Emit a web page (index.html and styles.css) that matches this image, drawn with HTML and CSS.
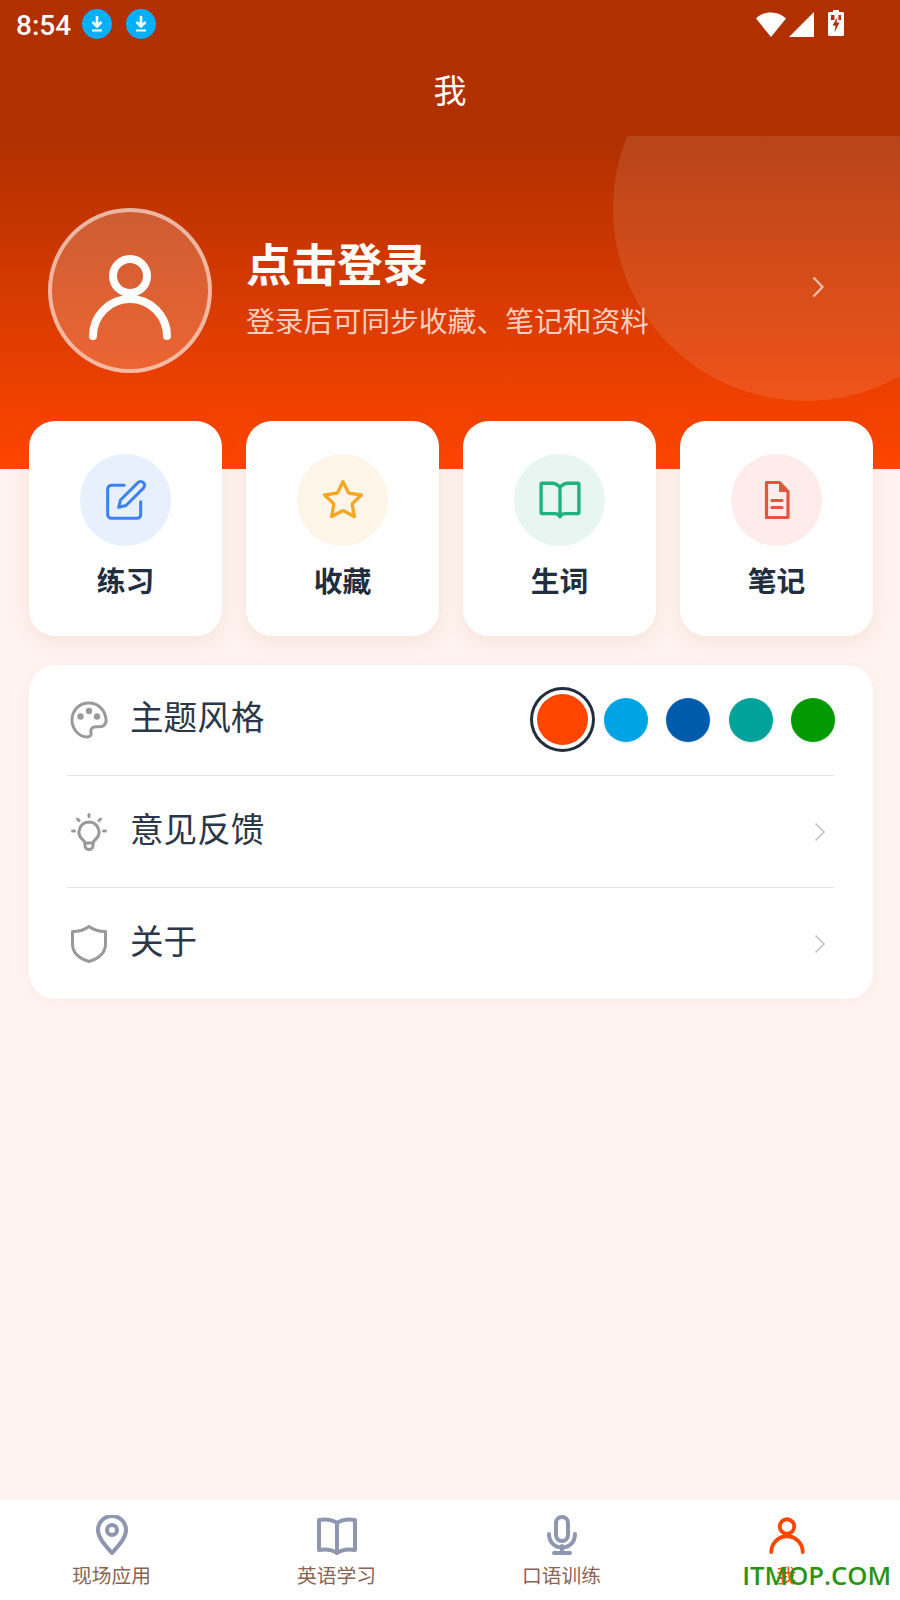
FILE: index.html
```html
<!DOCTYPE html>
<html lang="zh-CN">
<head>
<meta charset="utf-8">
<title>我</title>
<link rel="stylesheet" href="styles.css">
</head>
<body>
<div class="app">
  <header class="topbar">
    <div class="status">
      <span class="time">8:54</span>
      <svg class="dl" viewBox="0 0 30 30"><circle cx="15" cy="15" r="15" fill="#00b0ff"/><path d="M15 7v10M10.500 13l4.500 4.500 4.500-4.500" fill="none" stroke="#fff" stroke-width="2.600"/><path d="M10 21.500h10" stroke="#fff" stroke-width="2"/></svg>
      <svg class="dl dl-second" viewBox="0 0 30 30"><circle cx="15" cy="15" r="15" fill="#00b0ff"/><path d="M15 7v10M10.500 13l4.500 4.500 4.500-4.500" fill="none" stroke="#fff" stroke-width="2.600"/><path d="M10 21.500h10" stroke="#fff" stroke-width="2"/></svg>
      <span class="status-gap"></span>
      <svg class="wifi" viewBox="0 0 30 25"><path d="M0 6.500C4 2.500 9 .5 15 .5s11 2 15 6L15 25z" fill="#fff"/></svg>
      <svg class="signal" viewBox="0 0 25 25"><path d="M25 0v25H0z" fill="#fff"/></svg>
      <svg class="battery" viewBox="0 0 16 26"><path d="M5 0h6v2h3.500A1.500 1.500 0 0 1 16 3.500v21a1.500 1.500 0 0 1-1.500 1.500h-13A1.500 1.500 0 0 1 0 24.500v-21A1.500 1.500 0 0 1 1.500 2H5z" fill="#fff"/><path d="M3 5h3.500v5H3zM10.500 5H13v5h-2.500z" fill="#b03000"/><path d="M9.500 7 4.500 15.500h3l-1 7 5-10h-3z" fill="#b03000"/></svg>
    </div>
    <h1 class="page-title">我</h1>
  </header>

  <section class="hero">
    <div class="hero-disc"></div>
    <div class="avatar">
      <svg class="avatar-icon" viewBox="0 0 84 90"><circle cx="42" cy="23" r="17" fill="none" stroke="#fff" stroke-width="8"/><path d="M5 83A37 37 0 0 1 79 83" fill="none" stroke="#fff" stroke-width="8" stroke-linecap="round"/></svg>
    </div>
    <div class="hero-text">
      <div class="hero-name">点击登录</div>
      <div class="hero-sub">登录后可同步收藏、笔记和资料</div>
    </div>
    <svg class="hero-chev" viewBox="0 0 12 22"><path d="M1.500 1.500 10.500 11l-9 9.500" fill="none" stroke="currentColor" stroke-width="2.200"/></svg>
  </section>

  <section class="cards">
    <div class="card">
      <div class="card-icon tint-blue">
        <svg class="icon-44" viewBox="0 0 24 24" fill="none" stroke="#3b82f6" stroke-width="1.650" stroke-linecap="round" stroke-linejoin="round"><path d="M11 4H4a2 2 0 0 0-2 2v14a2 2 0 0 0 2 2h14a2 2 0 0 0 2-2v-7"/><path d="M18.500 2.500a2.121 2.121 0 0 1 3 3L12 15l-4 1 1-4z"/></svg>
      </div>
      <div class="card-label">练习</div>
    </div>
    <div class="card">
      <div class="card-icon tint-amber">
        <svg class="icon-44" viewBox="0 0 24 24" fill="none" stroke="#f5a623" stroke-width="1.800" stroke-linecap="round" stroke-linejoin="round"><path d="m12 2 3.090 6.260L22 9.270l-5 4.870 1.180 6.880L12 17.770l-6.180 3.250L7 14.140 2 9.270l6.910-1.010z"/></svg>
      </div>
      <div class="card-label">收藏</div>
    </div>
    <div class="card">
      <div class="card-icon tint-green">
        <svg class="icon-42" viewBox="0 0 40 40" fill="none" stroke="#1fb27f" stroke-width="3.200" stroke-linejoin="round"><path d="M20 8C18 5.500 15.500 4 12.500 4H3a1 1 0 0 0-1 1v27a1 1 0 0 0 1 1h12c2.500 0 4 1 5 3 1-2 2.500-3 5-3h12a1 1 0 0 0 1-1V5a1 1 0 0 0-1-1h-9.500C24.500 4 22 5.500 20 8zM20 8v28"/></svg>
      </div>
      <div class="card-label">生词</div>
    </div>
    <div class="card">
      <div class="card-icon tint-red">
        <svg class="icon-46" viewBox="0 0 46 46"><path d="M12.500 5.500h13l8.500 9v26H12.500z" fill="none" stroke="#e8533f" stroke-width="3.200" stroke-linejoin="round"/><path d="M25 5l9.500 10H25z" fill="#e8533f"/><path d="M18 23.500h10M18 30.500h10" stroke="#e8533f" stroke-width="3.200" stroke-linecap="round"/></svg>
      </div>
      <div class="card-label">笔记</div>
    </div>
  </section>

  <section class="list">
    <div class="row row-line">
      <svg class="row-icon" viewBox="0 0 38 38" fill="none" stroke="#999" stroke-width="3" stroke-linejoin="round"><path d="M19 2C9 2 2 9.500 2 19c0 9 7 17 15 17 3.500 0 4.500-2 4-4.500-.6-2.500.5-5 3-5.500 3-.5 6.500.5 9-1 2.500-1.500 3.500-4 3-7C35 9 28 2 19 2z"/><circle cx="10.500" cy="15.500" r="3.200" fill="#999" stroke="none"/><circle cx="19" cy="10" r="3.200" fill="#999" stroke="none"/><circle cx="27" cy="15.500" r="3.200" fill="#999" stroke="none"/></svg>
      <span class="row-text">主题风格</span>
      <div class="swatches">
        <span class="swatch swatch-on c1"></span>
        <span class="swatch c2"></span>
        <span class="swatch c3"></span>
        <span class="swatch c4"></span>
        <span class="swatch c5"></span>
      </div>
    </div>
    <div class="row row-line">
      <svg class="row-icon" viewBox="0 0 38 38" fill="none" stroke="#999" stroke-width="3" stroke-linecap="round"><path d="M19 9a10 10 0 0 0-6.500 17.500c1.500 1.300 2.500 2 2.500 3.500h8c0-1.500 1-2.200 2.500-3.500A10 10 0 0 0 19 9z"/><path d="M15 30v2.500a4 4 0 0 0 8 0V30"/><path d="M19 1.500v2M7.500 6 9 7.500M30.500 6 29 7.500M2.500 18h2M33.500 18h2"/></svg>
      <span class="row-text">意见反馈</span>
      <svg class="chev" viewBox="0 0 12 20"><path d="M1.500 1.500 10 10l-8.500 8.500" fill="none" stroke="currentColor" stroke-width="2"/></svg>
    </div>
    <div class="row">
      <svg class="row-icon" viewBox="0 0 38 38" fill="none" stroke="#999" stroke-width="3" stroke-linejoin="round"><path d="M19 1.500C14.500 5 8 6.500 2.500 6.500V19c0 8.500 7 14.500 16.500 17.500C28.500 33.500 35.500 27.500 35.500 19V6.500C30 6.500 23.500 5 19 1.500z"/></svg>
      <span class="row-text">关于</span>
      <svg class="chev" viewBox="0 0 12 20"><path d="M1.500 1.500 10 10l-8.500 8.500" fill="none" stroke="currentColor" stroke-width="2"/></svg>
    </div>
  </section>

  <div class="spacer"></div>

  <nav class="tabs">
    <div class="tab">
      <svg class="tab-icon" viewBox="0 0 40 40" fill="none" stroke="#8e96b0" stroke-width="4" stroke-linejoin="round"><path d="M20 38C13 30 6 23 6 15a14 14 0 0 1 28 0c0 8-7 15-14 23z"/><circle cx="20" cy="15" r="5"/></svg>
      <span class="tab-label">现场应用</span>
    </div>
    <div class="tab">
      <svg class="tab-icon" viewBox="0 0 40 40" fill="none" stroke="#8e96b0" stroke-width="4" stroke-linejoin="round"><path d="M20 8C15 4.500 8 4 2 5v30c6-1 13-.5 18 3 5-3.500 12-4 18-3V5c-6-1-13-.5-18 3zM20 8v30"/></svg>
      <span class="tab-label">英语学习</span>
    </div>
    <div class="tab">
      <svg class="tab-icon" viewBox="0 0 40 40" fill="none" stroke="#8e96b0" stroke-width="4" stroke-linecap="round"><rect x="14" y="2" width="12" height="24" rx="6"/><path d="M7 19c0 18 26 18 26 0"/><path d="M20 31v6"/><path d="M12 38h16"/></svg>
      <span class="tab-label">口语训练</span>
    </div>
    <div class="tab tab-on">
      <svg class="tab-icon" viewBox="-2 -4 88 94"><circle cx="42" cy="23" r="17" fill="none" stroke="#ff4500" stroke-width="9"/><path d="M5 83A37 37 0 0 1 79 83" fill="none" stroke="#ff4500" stroke-width="9" stroke-linecap="round"/></svg>
      <span class="tab-label">我</span>
    </div>
  </nav>
  <div class="watermark">ITMOP.COM</div>
</div>
</body>
</html>
```

FILE: styles.css
```css
* { box-sizing: border-box; }
html, body { margin: 0; padding: 0; }
body { font-family: "Noto Sans CJK SC", "Noto Sans", sans-serif; background: #fef3ef; }
.app { position: relative; width: 900px; height: 1600px; display: flex; flex-direction: column; overflow: hidden; background: #fef3ef; color: #2b3648; }

.topbar { height: 136px; background: #b03000; color: #fff; flex: none; }
.status { height: 50px; display: flex; align-items: center; padding-left: 16px; padding-right: 56px; }
.time { font-family: Roboto, sans-serif; font-weight: 500; font-size: 28px; width: 66px; line-height: 1; padding-top: 2px; }
.dl { width: 30px; height: 30px; flex: none; margin-top: -2px; }
.dl-second { margin-left: 14px; }
.status-gap { flex: 1; }
.wifi { width: 30px; height: 25px; flex: none; margin-top: -2px; }
.signal { width: 25px; height: 25px; margin-left: 3px; flex: none; margin-top: -2px; }
.battery { width: 16px; height: 26px; margin-left: 14px; flex: none; margin-top: -4px; }
.page-title { margin: 0; padding-top: 15px; text-align: center; font-size: 33px; font-weight: 400; line-height: 48px; }

.hero { position: relative; height: 333px; flex: none; overflow: hidden; display: flex; align-items: flex-start; padding: 72px 0 0 48px; background: linear-gradient(#b03000, #ff4500); }
.hero-disc { position: absolute; left: 613px; top: -120px; width: 385px; height: 385px; border-radius: 50%; background: rgba(255,255,255,.1); }
.avatar { width: 164px; height: 165px; flex: none; border-radius: 50%; border: 4px solid rgba(255,255,255,.55); background: rgba(255,255,255,.2); display: flex; align-items: center; justify-content: center; }
.avatar-icon { width: 84px; height: 90px; margin-top: 14px; }
.hero-text { position: relative; margin-left: 34px; padding-top: 23px; color: #fff; }
.hero-name { font-size: 45.500px; font-weight: 700; line-height: 62px; }
.hero-sub { font-size: 28.800px; line-height: 44px; margin-top: 5px; color: rgba(255,255,255,.75); white-space: nowrap; }
.hero-chev { position: absolute; left: 812px; top: 140px; width: 12px; height: 22px; color: rgba(255,255,255,.65); }

.cards { position: relative; display: grid; grid-template-columns: repeat(4, 193px); gap: 24px; padding-left: 29px; margin-top: -48px; flex: none; }
.card { height: 215px; background: #fff; border-radius: 26px; box-shadow: 0 6px 20px rgba(190,90,50,.1); display: flex; flex-direction: column; align-items: center; padding-top: 33px; }
.card-icon { width: 91px; height: 92px; border-radius: 50%; display: flex; align-items: center; justify-content: center; }
.icon-46 { width: 46px; height: 46px; }
.icon-44 { width: 44px; height: 44px; }
.icon-42 { width: 42px; height: 42px; }
.tint-blue { background: #e9f0fd; }
.tint-amber { background: #fef5e9; }
.tint-green { background: #e8f6f1; }
.tint-red { background: #fdecea; }
.card-label { margin-top: 13px; font-size: 28.800px; font-weight: 700; line-height: 42px; color: #222d3d; }

.list { margin: 29px 27px 0 29px; padding: 0 38px; background: #fff; border-radius: 26px; box-shadow: 0 2px 10px rgba(190,90,50,.05); flex: none; }
.row { height: 111px; display: flex; align-items: center; }
.row-line { border-bottom: 1px solid #f0e4e0; }
.row-line + .row-line { height: 112px; }
.row-icon { width: 38px; height: 38px; margin-left: 3px; flex: none; }
.row-text { margin-left: 22px; font-size: 33.600px; line-height: 48px; color: #2b3648; flex: 1; margin-top: -8px; }
.chev { width: 12px; height: 20px; margin-right: 9px; color: #ccc; }
.swatches { display: flex; align-items: center; gap: 18.500px; }
.swatch { width: 44px; height: 44px; border-radius: 50%; box-shadow: 0 1px 3px rgba(0,0,0,.12); }
.swatch-on { width: 51px; height: 51px; margin-right: -3px; margin-top: -1px; box-shadow: 0 0 0 4px #fff, 0 0 0 7px #222d3d; }
.c1 { background: #ff4500; }
.c2 { background: #00a4e4; }
.c3 { background: #005bac; }
.c4 { background: #00a29a; }
.c5 { background: #009a00; }

.spacer { flex: 1; }
.tabs { height: 100px; background: #fff; display: grid; grid-template-columns: repeat(4, 225px); margin-left: -1px; flex: none; }
.tab { display: flex; flex-direction: column; align-items: center; padding-top: 15px; }
.tab-icon { width: 40px; height: 40px; flex: none; }
.tab-label { font-size: 19.800px; line-height: 28px; margin-top: 6px; color: #8a6354; white-space: nowrap; }
.tab-on .tab-label { color: #ff4500; }
.watermark { position: absolute; right: 9px; bottom: 6px; font-family: "Open Sans", sans-serif; font-weight: 600; font-size: 25.600px; line-height: 36px; color: #2a9412; white-space: nowrap; }
```
